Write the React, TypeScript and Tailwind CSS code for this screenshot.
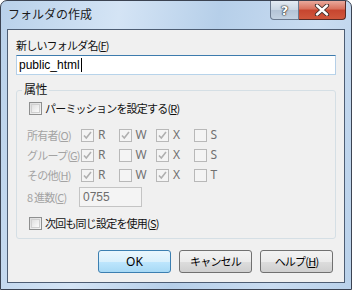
import React from "react";

const JP = "font-['Meiryo_UI','Noto_Sans_CJK_JP',sans-serif]";

function Box({ checked = false, disabled = false }: { checked?: boolean; disabled?: boolean }) {
  return (
    <span
      className={`relative inline-flex h-[13px] w-[13px] shrink-0 items-center justify-center border ${
        disabled
          ? "border-[#b8b8b8] bg-[#f4f4f4]"
          : "border-[#8e8f8f] bg-gradient-to-br from-[#dcdcdc] to-[#f6f6f6]"
      }`}
    >
      {!disabled && <span className="h-[9px] w-[9px] border border-[#d0d0d0] bg-gradient-to-br from-[#e0e0e0] to-[#fbfbfb]" />}
      {checked && (
        <svg width="11" height="11" viewBox="0 0 11 11" className="absolute">
          <path d="M2 5.5 L4.3 8 L9 2" fill="none" stroke="#b0b0b0" strokeWidth="1.6" />
        </svg>
      )}
    </span>
  );
}

function Acc({ c }: { c: string }) {
  return <span className="underline underline-offset-[1px]">{c}</span>;
}

function PermRow({ label, acc, checks, last }: { label: string; acc: string; checks: boolean[]; last: string }) {
  const letters = ["R", "W", "X", last];
  return (
    <div className="flex h-[20px] items-center">
      <span className="w-[54px] whitespace-nowrap text-[#a3a3a3]">
        {label}(<Acc c={acc} />)
      </span>
      {letters.map((l, i) => (
        <span key={i} className={`flex items-center gap-[4px] ${i < 3 ? "w-[37.5px]" : ""}`}>
          <Box disabled checked={checks[i]} />
          <span className="font-['Noto_Sans',sans-serif] text-[12px] tracking-normal text-[#707070]">{l}</span>
        </span>
      ))}
    </div>
  );
}

function Btn({ children, primary = false }: { children: React.ReactNode; primary?: boolean }) {
  return (
    <button
      className={`flex h-[23px] w-[73px] items-center justify-center rounded-[3px] border text-black ${
        primary
          ? "border-[#3c7fb1] bg-[linear-gradient(#eaf6fd_0%,#d9f0fc_50%,#bee6fd_51%,#a7d9f5_100%)]"
          : "border-[#707070] bg-[linear-gradient(#f2f2f2_0%,#ebebeb_50%,#dddddd_51%,#cfcfcf_100%)]"
      }`}
    >
      {children}
    </button>
  );
}

export default function App() {
  return (
    <div className={`h-[291px] w-[353px] bg-white ${JP} text-[11px] leading-none tracking-[-0.8px]`}>
      <div className="relative flex h-[290px] w-[352px] flex-col rounded-t-[7px] border border-[#3b4352] bg-[linear-gradient(100deg,#b9d1ea_0%,#d4e4f5_30%,#b6cfe9_55%,#c9dcf1_80%,#b9d1ea_100%)]">
        {/* title bar */}
        <div className="flex h-[28px] items-start">
          <span className="mt-[7px] ml-[7px] text-[12px] tracking-normal text-[#1a1a1a]">フォルダの作成</span>
          <div className="ml-auto mr-[5px] flex">
            <div className="flex h-[19px] w-[29px] items-center justify-center rounded-bl-[4px] border border-t-0 border-[#6b7a8f] bg-[linear-gradient(#e3ebf3_0%,#c9d6e3_50%,#b4c4d6_51%,#c3d2e2_100%)]">
              <span className="font-['DejaVu_Sans',sans-serif] text-[13px] font-bold tracking-normal text-white [text-shadow:0_0_1px_#222,0_0_1px_#222,0_0_2px_#333]">?</span>
            </div>
            <div className="flex h-[19px] w-[47px] items-center justify-center rounded-br-[4px] border border-t-0 border-l-0 border-[#5a2a24] bg-[linear-gradient(#e9a99c_0%,#d8705c_45%,#c7452f_50%,#d0573c_100%)]">
              <svg width="16" height="12" viewBox="0 0 16 12">
                <path d="M3 1.5 L13 10.5 M13 1.5 L3 10.5" stroke="#3a2a28" strokeWidth="4.2" strokeLinecap="round" />
                <path d="M3 1.5 L13 10.5 M13 1.5 L3 10.5" stroke="#fff" strokeWidth="2.4" strokeLinecap="round" />
              </svg>
            </div>
          </div>
        </div>
        {/* client area */}
        <div className="mx-[6px] flex h-[254px] flex-col border border-[#4d5d73] bg-[#f0f0f0] px-[8px]">
          <div className="mt-[10px] h-[14px] text-[#111]">
            新しいフォルダ名(<Acc c="F" />)
          </div>
          <div className="mt-[1px] flex h-[20px] items-center border border-[#3d7bad] border-l-[#b5cfe7] border-r-[#b5cfe7] border-b-[#b7d3ea] bg-white pl-[2px]">
            <span className="font-['Liberation_Sans',sans-serif] text-[12px] tracking-normal text-black">public_html</span>
            <span className="ml-[1px] h-[14px] w-[1px] bg-black" />
          </div>
          {/* group box */}
          <div className="relative mt-[15px] h-[149px] rounded-[3px] border border-[#d5dfe5] pl-[10px] pr-[10px]">
            <span className="absolute left-[5px] top-[-8px] bg-[#f0f0f0] px-[2px] text-[12px] tracking-[-0.5px] text-[#111]">属性</span>
            <div className="mt-[10px] flex h-[14px] items-center gap-[3px] pl-[2px]">
              <Box />
              <span className="whitespace-nowrap text-[#111]">
                パーミッションを設定する(<Acc c="R" />)
              </span>
            </div>
            <div className="mt-[10px] flex flex-col">
              <PermRow label="所有者" acc="O" checks={[true, true, true, false]} last="S" />
              <PermRow label="グループ" acc="G" checks={[true, false, true, false]} last="S" />
              <PermRow label="その他" acc="H" checks={[true, false, true, false]} last="T" />
            </div>
            <div className="mt-[2px] flex h-[20px] items-center">
              <span className="w-[52px] whitespace-nowrap text-[#a3a3a3]">
                8&nbsp;進数(<Acc c="C" />)
              </span>
              <span className="flex h-[20px] w-[63px] items-center border border-[#c4c4c4] bg-[#f4f4f4] pl-[3px] font-['Liberation_Sans',sans-serif] text-[12px] tracking-normal text-[#6d6d6d]">
                0755
              </span>
            </div>
            <div className="mt-[9px] flex h-[14px] items-center gap-[3px] pl-[2px]">
              <Box />
              <span className="whitespace-nowrap text-[#111]">
                次回も同じ設定を使用(<Acc c="S" />)
              </span>
            </div>
          </div>
          <div className="mt-[11px] flex justify-end gap-[8px] pr-[3px]">
            <Btn primary>
              <span className="font-['Noto_Sans',sans-serif] text-[12px] tracking-normal">OK</span>
            </Btn>
            <Btn>キャンセル</Btn>
            <Btn>
              ヘルプ(<Acc c="H" />)
            </Btn>
          </div>
        </div>
      </div>
    </div>
  );
}
